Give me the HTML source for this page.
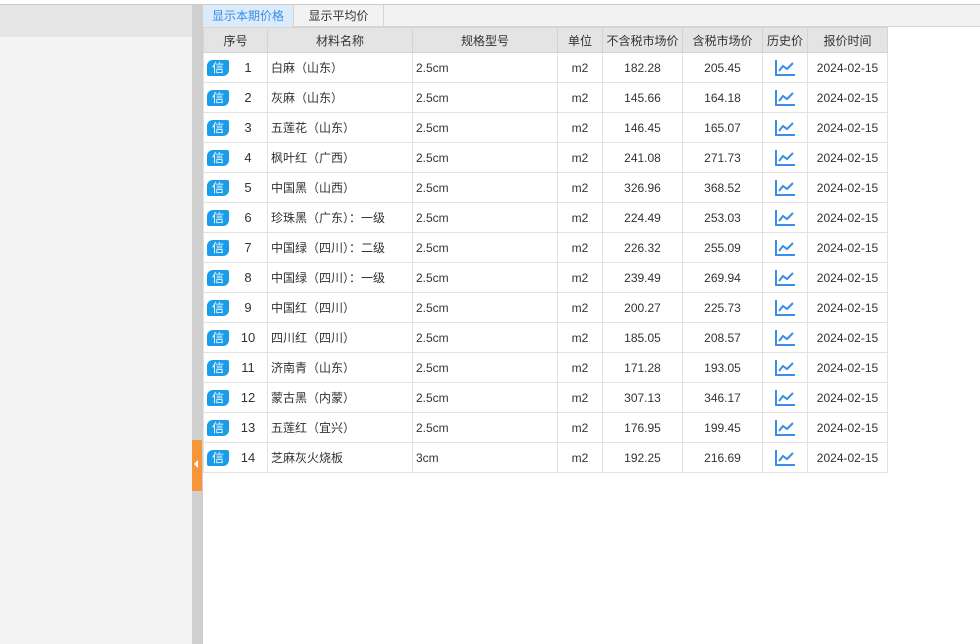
<!DOCTYPE html>
<html><head><meta charset="utf-8"><style>
*{margin:0;padding:0;box-sizing:border-box}
body{width:980px;height:644px;background:#fff;font-family:"Liberation Sans","Noto Sans CJK SC",sans-serif;font-size:12px;color:#333;position:relative;overflow:hidden}
.top{position:absolute;left:0;top:0;width:980px;height:5px;background:#fff;border-bottom:1px solid #ccc}
.left{position:absolute;left:0;top:5px;width:192px;height:639px;background:#f4f4f4}
.lefth{position:absolute;left:0;top:5px;width:192px;height:32px;background:#e6e6e6}
.split{position:absolute;left:192px;top:5px;width:11px;height:639px;background:#cfcfcf}
.orange{position:absolute;left:192px;top:440px;width:10px;height:51px;background:#f7953a}
.orange:after{content:"";position:absolute;left:2px;top:20px;border-right:4px solid #fff;border-top:4px solid transparent;border-bottom:4px solid transparent}
.tabs{position:absolute;left:203px;top:5px;width:777px;height:22px;background:#f2f2f2;border-bottom:1px solid #d6d6d6}
.tab{position:absolute;top:0;height:22px;line-height:22px;text-align:center;font-size:12px;border-right:1px solid #d6d6d6}
table{position:absolute;left:203px;top:27px;border-collapse:collapse;table-layout:fixed}
td,th{border:1px solid #e2e2e2;height:30px;text-align:center;font-weight:normal;white-space:nowrap;overflow:hidden;font-size:12px}
th{height:25px;background:#e4e4e4;border-color:#d4d4d4;color:#333}
td.l{text-align:left;padding-left:3px}
.b{position:absolute;left:3px;top:7px;width:22px;height:16px;background:#1a9ce8;color:#fff;border-radius:6px 2px 6px 2px;font-size:12px;line-height:16px;text-align:center}
td.n{position:relative;padding-left:25px;font-size:13px}
</style></head><body>
<div class="top"></div>
<div class="left"></div><div class="lefth"></div>
<div class="split"></div><div class="orange"></div>
<div class="tabs">
<div class="tab" style="left:0;width:91px;background:#dcebfa;color:#3a8ee6">显示本期价格</div>
<div class="tab" style="left:91px;width:90px;color:#333">显示平均价</div>
</div>
<table>
<colgroup><col style="width:64px"><col style="width:145px"><col style="width:145px"><col style="width:45px"><col style="width:80px"><col style="width:80px"><col style="width:45px"><col style="width:80px"></colgroup>
<tr><th>序号</th><th>材料名称</th><th>规格型号</th><th>单位</th><th>不含税市场价</th><th>含税市场价</th><th>历史价</th><th>报价时间</th></tr>
<tbody id="tb">
</tbody></table>
<script>
var d=[["白麻（山东）","2.5cm","182.28","205.45"],["灰麻（山东）","2.5cm","145.66","164.18"],["五莲花（山东）","2.5cm","146.45","165.07"],["枫叶红（广西）","2.5cm","241.08","271.73"],["中国黑（山西）","2.5cm","326.96","368.52"],["珍珠黑（广东）：一级","2.5cm","224.49","253.03"],["中国绿（四川）：二级","2.5cm","226.32","255.09"],["中国绿（四川）：一级","2.5cm","239.49","269.94"],["中国红（四川）","2.5cm","200.27","225.73"],["四川红（四川）","2.5cm","185.05","208.57"],["济南青（山东）","2.5cm","171.28","193.05"],["蒙古黑（内蒙）","2.5cm","307.13","346.17"],["五莲红（宜兴）","2.5cm","176.95","199.45"],["芝麻灰火烧板","3cm","192.25","216.69"]];
var ic='<svg width="22" height="18" viewBox="0 0 22 18"><path d="M2 1V16H21" fill="none" stroke="#3a8ee6" stroke-width="2"/><path d="M5 12L9 7L13 10L19 4" fill="none" stroke="#3a8ee6" stroke-width="2"/></svg>';
var h="";d.forEach(function(r,i){h+='<tr><td class="n"><span class="b">信</span>'+(i+1)+'</td><td class="l">'+r[0]+'</td><td class="l">'+r[1]+'</td><td>m2</td><td>'+r[2]+'</td><td>'+r[3]+'</td><td style="padding-top:4px">'+ic+'</td><td>2024-02-15</td></tr>'});
document.getElementById("tb").innerHTML=h;
</script>
</body></html>
